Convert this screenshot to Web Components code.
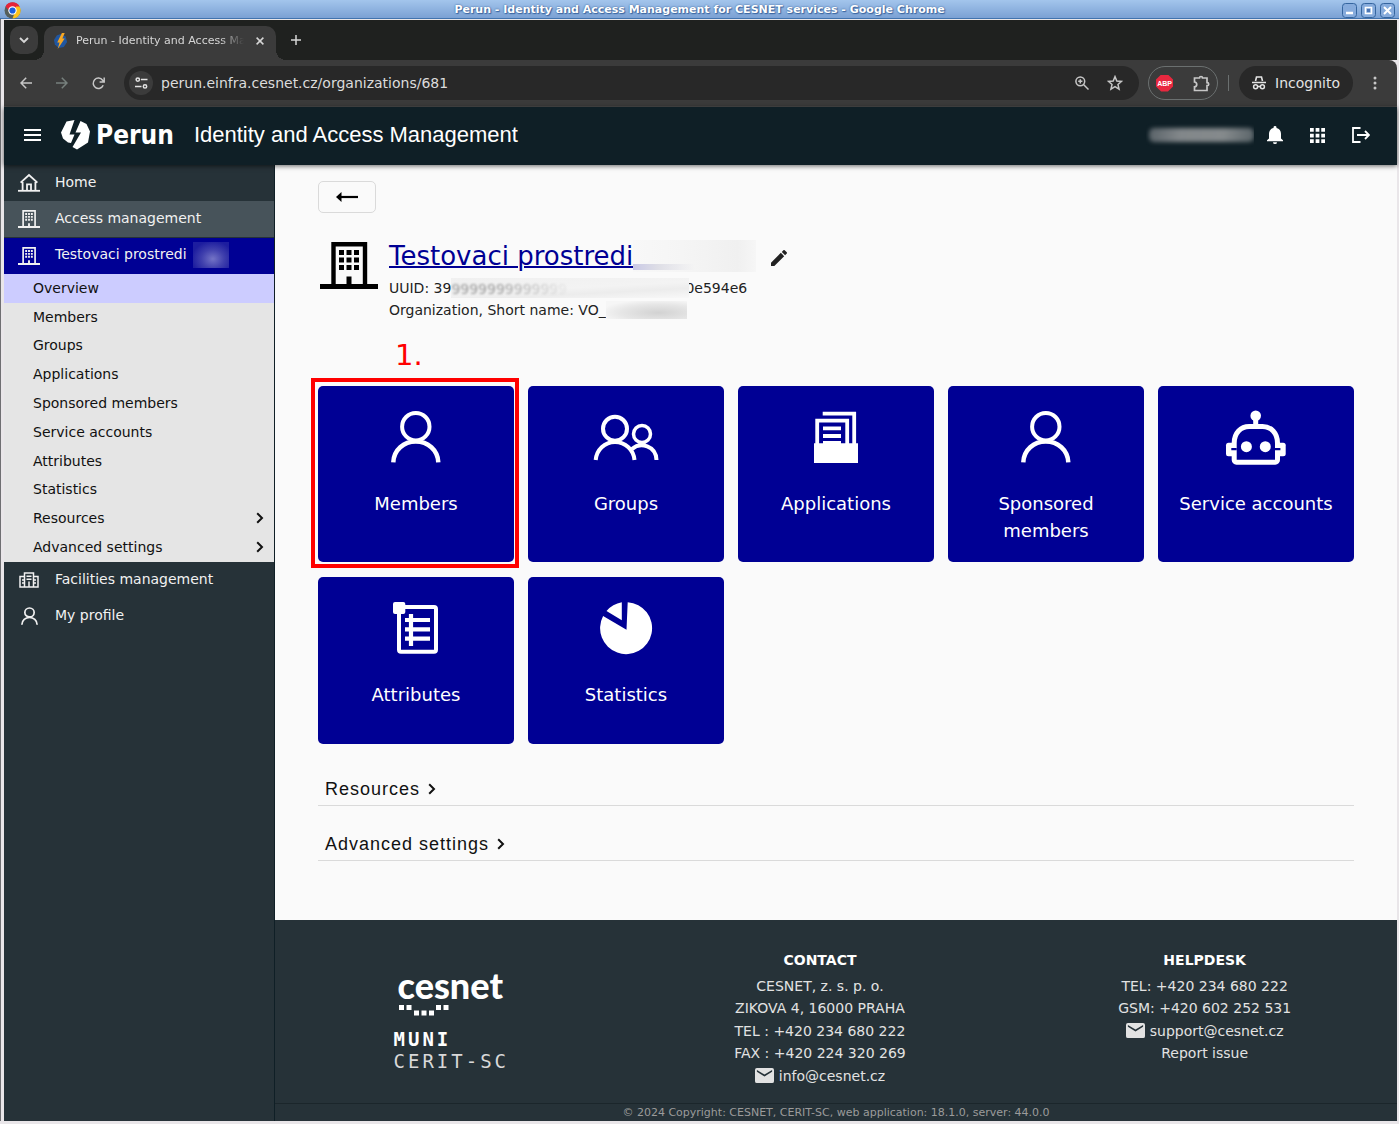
<!DOCTYPE html>
<html lang="en">
<head>
<meta charset="utf-8">
<meta name="viewport" content="width=device-width, initial-scale=1">
<title>Perun - Identity and Access Management for CESNET services</title>
<style>
    body {
        margin: 0;
        font-family: "DejaVu Sans", Verdana, sans-serif;
        font-size: 14px;
        line-height: 22px;
        color: #222;
    }
</style>
</head>
<body>

<desktop-window caption="Perun - Identity and Access Management for CESNET services - Google Chrome">
    <browser-tabs slot="chrome">Perun - Identity and Access Management for CESNET</browser-tabs>
    <browser-toolbar slot="chrome" url="perun.einfra.cesnet.cz/organizations/681"></browser-toolbar>

    <perun-header>Identity and Access Management</perun-header>
    <perun-layout>
        <perun-sidebar slot="side">
            <side-item icon="home">Home</side-item>
            <side-item icon="building" tone="open">Access management</side-item>
            <side-item icon="building" tone="current">Testovaci prostredi <smudge-patch kind="side"></smudge-patch></side-item>
            <side-submenu>
                <side-link active>Overview</side-link>
                <side-link>Members</side-link>
                <side-link>Groups</side-link>
                <side-link>Applications</side-link>
                <side-link>Sponsored members</side-link>
                <side-link>Service accounts</side-link>
                <side-link>Attributes</side-link>
                <side-link>Statistics</side-link>
                <side-link expandable>Resources</side-link>
                <side-link expandable>Advanced settings</side-link>
            </side-submenu>
            <side-item icon="facility">Facilities management</side-item>
            <side-item icon="profile">My profile</side-item>
        </perun-sidebar>

        <vo-overview>
            <vo-heading slot="heading"></vo-heading>
            <menu-card icon="user" step="1.">Members</menu-card>
            <menu-card icon="users">Groups</menu-card>
            <menu-card icon="applications">Applications</menu-card>
            <menu-card icon="user">Sponsored members</menu-card>
            <menu-card icon="robot">Service accounts</menu-card>
            <menu-card icon="attributes">Attributes</menu-card>
            <menu-card icon="statistics">Statistics</menu-card>
            <more-section slot="more">Resources</more-section>
            <more-section slot="more">Advanced settings</more-section>
        </vo-overview>

        <perun-footer></perun-footer>
    </perun-layout>
</desktop-window>

<script>
/* Inner markup of every icon, with its viewBox */
const ICONS = {
    home: ['0 0 22 20', `<path d="M0 17.8H22" stroke="currentColor" stroke-width="1.8"/><path d="M4.6 17V9M17.4 17V9M2.6 9.6L11 2l8.4 7.6M9 17v-5.6h4V17" fill="none" stroke="currentColor" stroke-width="1.8"/>`],
    building: ['0 0 58 47', `<path d="M13.500 43V2.200H45V43" fill="none" stroke="currentColor" stroke-width="4.400"/><path d="M0 42h58v5H0zM26.500 34.500h5V42h-5zM19 8h5v5h-5zM26.500 8h5v5h-5zM34 8h5v5h-5zM19 15.500h5v5h-5zM26.500 15.500h5v5h-5zM34 15.500h5v5h-5zM19 23h5v5h-5zM26.500 23h5v5h-5zM34 23h5v5h-5z" fill="currentColor"/>`],
    facility: ['0 0 20 16', `<path d="M5.500 15V1h9v14M5.500 4.500H1V15h18V4.500h-4.500M7.500 4.200h5M7.500 7.200h5M10 15V9.500M3 8h2M3 11h2M15 8h2M15 11h2" fill="none" stroke="currentColor" stroke-width="1.500"/>`],
    profile: ['8 4 50 56', `<g fill="none" stroke="currentColor" stroke-width="5"><circle cx="33" cy="21" r="13.700"/><path d="M10.500 59C11 45 21 36.500 33 36.500S55 45 55.500 59"/></g>`],
    user: ['0 0 66 66', `<g fill="none" stroke="currentColor"><circle cx="32.800" cy="21.700" r="13.700" stroke-width="4"/><path d="M10.300 57.300C10.800 45 20.800 36.500 32.800 36.500S54.800 45 55.300 57.300" stroke-width="4.500"/></g>`],
    users: ['0 0 66 66', `<g fill="none" stroke="currentColor" stroke-width="4"><circle cx="22" cy="23.700" r="12"/><path d="M2.700 55C3.500 45 11.500 37 22 37s18.700 8 19.500 18"/><circle cx="49" cy="29" r="8.500" stroke-width="3.500"/><path d="M39 44c8.500-7.500 24-3 24.500 11"/></g>`],
    applications: ['0 0 66 66', `<path d="M11 38.300h44V58H11z" fill="currentColor"/><path d="M14.200 39V15.600h30V39M19.700 8.600h31.500V39M20 23.300h18M20 31h18M20 38h18" fill="none" stroke="currentColor" stroke-width="3.800"/>`],
    robot: ['0 0 66 66', `<circle cx="32.700" cy="10.700" r="5.300" fill="currentColor"/><path d="M32.700 14v6" stroke="currentColor" stroke-width="5"/><rect x="3" y="37.700" width="59.700" height="13.600" rx="2.500" fill="currentColor"/><path d="M11.200 38c0-10 6.500-16.500 15-16.500h13.300c8.500 0 15 6.500 15 16.500v17a2.200 2.200 0 0 1-2.200 2.200H13.400a2.200 2.200 0 0 1-2.200-2.200z" fill="#000094" stroke="currentColor" stroke-width="5"/><path d="M8.300 43h5.400v2.200H8.300zM52 43h5.400v2.200H52z" fill="#000094"/><circle cx="23.400" cy="41.700" r="5.500" fill="currentColor"/><circle cx="42.300" cy="41.700" r="5.500" fill="currentColor"/>`],
    attributes: ['0 0 66 66', `<rect x="10" y="6" width="12.300" height="12" rx="2" fill="currentColor"/><rect x="16" y="11" width="37" height="44.700" rx="2" fill="none" stroke="currentColor" stroke-width="4"/><path d="M22 24h25M22 33.400h25M22 42.700h25M28 18v32" stroke="currentColor" stroke-width="4.200"/>`],
    statistics: ['0 0 66 66', `<path d="M34.700 6.200A26 26 0 1 1 10.100 20L33.500 33.700zM28.800 6.200V24.300L13.500 14.900A26 26 0 0 1 28.800 6.200z" fill="currentColor"/>`],
    chevron: ['0 0 8 12', `<path d="M1.200 1.200L6 6 1.200 10.800" fill="none" stroke="currentColor" stroke-width="2"/>`],
    arrow: ['0 0 22 12', `<path d="M4 6h18" stroke="currentColor" stroke-width="2.200"/><path d="M0 6l5.500-5v10z" fill="currentColor"/>`],
    pencil: ['3 3 18 18', `<path d="M3 17.250V21h3.750L17.810 9.940l-3.750-3.750L3 17.250zM20.710 7.040a1 1 0 0 0 0-1.410l-2.340-2.340a1 1 0 0 0-1.410 0l-1.830 1.830 3.750 3.750 1.830-1.830z" fill="currentColor"/>`],
    mail: ['2 4 20 16', `<path d="M20 4H4a2 2 0 0 0-2 2v12a2 2 0 0 0 2 2h16a2 2 0 0 0 2-2V6a2 2 0 0 0-2-2zm0 4l-8 5-8-5V6l8 5 8-5v2z" fill="currentColor"/>`],
    burger: ['0 0 17 12', `<path d="M0 1h17M0 6h17M0 11h17" stroke="currentColor" stroke-width="2"/>`],
    bell: ['4 2.500 16 19.500', `<path d="M12 22a2 2 0 0 0 2-2h-4a2 2 0 0 0 2 2zm6-6v-5c0-3.070-1.640-5.640-4.500-6.320V4a1.500 1.500 0 0 0-3 0v.68C7.630 5.360 6 7.920 6 11v5l-2 2v1h16v-1l-2-2z" fill="currentColor"/>`],
    apps: ['4 4 16 16', `<path d="M4 8h4V4H4zm6 12h4v-4h-4zm-6 0h4v-4H4zm0-6h4v-4H4zm6 0h4v-4h-4zm6-10v4h4V4zm-6 4h4V4h-4zm6 6h4v-4h-4zm0 6h4v-4h-4z" fill="currentColor"/>`],
    logout: ['0 0 18 16', `<path d="M8.500 1H1v14h7.500M5 8h12M13 4l4 4-4 4" fill="none" stroke="currentColor" stroke-width="1.800"/>`],
    emblem: ['0 0 30 30', `<path d="M5.500 1.500L13.500 0 8.500 14.500h5L10 23 7 22.500 2 18.500 0 12.500z" fill="currentColor"/><path d="M19.500 1L25.500 4 29 11.500 27 22.500 16 29.500 11.500 27 20 12.500h-5.500z" fill="currentColor"/>`],
    favicon: ['0 0 16 16', `<path d="M8 1l5.500 2.500L15 9l-3.500 5L6 15 2 11.500 1 7l3-4.500z" fill="#2056a0"/><path d="M9.500 0h3L10 5.500h2.500L5 16l2-6.500H4.500z" fill="#f5a623"/>`],
    chromium: ['0 0 17 17', `<circle cx="8.500" cy="8.500" r="8" fill="#555f5c"/><path d="M1.500 4.500a8 8 0 0 1 14 0L12 8.500H5z" fill="#e5233a"/><path d="M15.500 4.500a8 8 0 0 1-7 12L11 10l1-5.500z" fill="#fcc21b"/><circle cx="8.500" cy="8.500" r="4.200" fill="#fff"/><circle cx="8.500" cy="8.500" r="3.100" fill="#1a5fe0"/>`],
    down: ['0 0 10 7', `<path d="M1 1l4 4 4-4" fill="none" stroke="currentColor" stroke-width="1.900"/>`],
    close: ['0 0 8 8', `<path d="M.6.6l6.800 6.800M7.400.6L.6 7.400" stroke="currentColor" stroke-width="1.500"/>`],
    plus: ['0 0 10 10', `<path d="M5 0v10M0 5h10" stroke="currentColor" stroke-width="1.500"/>`],
    left: ['0 0 12 12', `<path d="M12 6H1.200M6.200.8L1 6l5.200 5.200" fill="none" stroke="currentColor" stroke-width="1.500"/>`],
    right: ['0 0 12 12', `<path d="M0 6h10.800M5.800.8L11 6l-5.200 5.200" fill="none" stroke="currentColor" stroke-width="1.500"/>`],
    reload: ['0 0 13 13', `<path d="M11.200 8.300A5.200 5.200 0 1 1 10.600 3.200L12 4.800M12.200.5v4.600H7.600" fill="none" stroke="currentColor" stroke-width="1.500"/>`],
    tune: ['0 0 13 12', `<g fill="none" stroke="currentColor" stroke-width="1.500"><circle cx="2.800" cy="2.600" r="1.700"/><path d="M6 2.600h6.500M0 9.400h6.500"/><circle cx="10" cy="9.400" r="1.700"/></g>`],
    zoom: ['0 0 14 14', `<g fill="none" stroke="currentColor" stroke-width="1.500"><circle cx="5.300" cy="5.300" r="4.400"/><path d="M8.500 8.500l5 5"/><path d="M5.300 3.200v4.200M3.200 5.300h4.200"/></g>`],
    star: ['0 0 15 15', `<path d="M7.500 1.500l1.700 4.100 4.400.4-3.300 2.900 1 4.300-3.800-2.300-3.800 2.300 1-4.300L1.400 6l4.400-.4z" fill="none" stroke="currentColor" stroke-width="1.400"/>`],
    puzzle: ['0 0 17 17', `<path d="M1.500 3h5c0-2 3-2 3 0H14v4.700c2.300 0 2.300 3 0 3V15.500H1.500v-3.700c3-.4 3-4.400 0-4.800z" fill="none" stroke="currentColor" stroke-width="1.700"/>`],
    spy: ['0 0 14 14', `<path d="M3.500 5l1-4h5l1 4M0 6.500h14" fill="none" stroke="currentColor" stroke-width="1.600"/><g fill="none" stroke="currentColor" stroke-width="1.500"><circle cx="3.600" cy="10.800" r="2"/><circle cx="10.400" cy="10.800" r="2"/><path d="M5.500 10.500h3"/></g>`],
    dots: ['0 0 4 14', `<g fill="currentColor"><circle cx="2" cy="2" r="1.500"/><circle cx="2" cy="7" r="1.500"/><circle cx="2" cy="12" r="1.500"/></g>`],
    minimize: ['0 0 15 15', `<rect x=".5" y=".5" width="14" height="14" rx="3" fill="#86abdc" stroke="#35659f"/><path d="M4 10h7" stroke="#fff" stroke-width="2.500"/>`],
    maximize: ['0 0 15 15', `<rect x=".5" y=".5" width="14" height="14" rx="3" fill="#86abdc" stroke="#35659f"/><path d="M4.500 4.500h6v6h-6z" fill="#86abdc" stroke="#fff" stroke-width="1.600"/><path d="M6 6h3v3H6z" fill="#4b76b4"/>`],
    quit: ['0 0 15 15', `<rect x=".5" y=".5" width="14" height="14" rx="3" fill="#86abdc" stroke="#35659f"/><path d="M4 4l7 7M11 4l-7 7" stroke="#fff" stroke-width="2"/>`]
};

const icon = (name, width, height) => `<svg width="${width}" height="${height}" viewBox="${ICONS[name][0]}" preserveAspectRatio="none" aria-hidden="true">${ICONS[name][1]}</svg>`;

/* Rules needed in every shadow root */
const BASE = `
    :host { display: block; box-sizing: border-box; }
    *, *::before, *::after { box-sizing: border-box; }
    svg { display: block; flex: none; }
    a { color: inherit; text-decoration: none; }
    button {
        display: flex;
        align-items: center;
        justify-content: center;
        padding: 0;
        border: 0;
        background: none;
        color: inherit;
        font: inherit;
        cursor: pointer;
    }
`;

class BaseElement extends HTMLElement {
    constructor() {
        super();

        this.shadow = this.attachShadow({mode: 'open'});
    }

    connectedCallback() {
        this.shadow.innerHTML = `<style>${BASE}${this.styles()}</style>${this.markup()}`;
    }

    styles() {
        return '';
    }

    markup() {
        return '<slot></slot>';
    }
}

/* Window frame with the title bar of the window manager */
class DesktopWindow extends BaseElement {
    styles() {
        return `
            :host {
                display: flex;
                flex-direction: column;
                min-height: 100vh;
                border: solid #e9e6e9;
                border-width: 0 2px 3px 0;
                box-shadow: inset 1px 0 #6f6f72;
                background: #e9e6e9;
            }
            .bar {
                display: grid;
                grid-template-columns: 60px 1fr 60px;
                align-items: center;
                height: 19px;
                margin-right: -2px;
                padding: 1px 4px 0 4px;
                border-bottom: 1px solid #4173ae;
                background: linear-gradient(#a3c5ec, #7ba1d4);
            }
            .title {
                text-align: center;
                color: #fff;
                font-size: 11px;
                font-weight: bold;
                line-height: 18px;
                text-shadow: 0 0 2px #2c568f, 1px 1px 1px #3c68a5;
                white-space: nowrap;
            }
            .buttons { display: flex; justify-content: flex-end; gap: 4px; }
            .content {
                display: flex;
                flex-direction: column;
                flex: 1;
                margin: 1px 0 0 4px;
            }
        `;
    }

    markup() {
        return `
            <div class="bar">
                ${icon('chromium', 17, 17)}
                <div class="title">${this.getAttribute('caption')}</div>
                <div class="buttons">
                    <button aria-label="Minimize">${icon('minimize', 15, 15)}</button>
                    <button aria-label="Maximize">${icon('maximize', 15, 15)}</button>
                    <button aria-label="Close">${icon('quit', 15, 15)}</button>
                </div>
            </div>
            <div class="content"><slot name="chrome"></slot><slot></slot></div>
        `;
    }
}

class BrowserTabs extends BaseElement {
    styles() {
        return `
            :host { background: #1f211f; color: #d6d6d6; }
            .strip { display: flex; align-items: flex-end; height: 40px; padding-left: 6px; }
            .list {
                width: 28px;
                height: 28px;
                margin: 0 6px 6px 0;
                border-radius: 10px;
                background: #3b3b3b;
            }
            .tab {
                position: relative;
                display: flex;
                align-items: center;
                width: 232px;
                height: 34px;
                padding: 0 12px 5px 9px;
                border-radius: 10px 10px 0 0;
                background: #3b3b3b;
                font-size: 11px;
            }
            .tab::before, .tab::after {
                content: "";
                position: absolute;
                bottom: 0;
                width: 10px;
                height: 10px;
            }
            .tab::before { right: 100%; background: radial-gradient(circle at 0 0, transparent 10px, #3b3b3b 10px); }
            .tab::after { left: 100%; background: radial-gradient(circle at 100% 0, transparent 10px, #3b3b3b 10px); }
            .name {
                flex: 1;
                margin: 0 12px 0 8px;
                overflow: hidden;
                white-space: nowrap;
                -webkit-mask-image: linear-gradient(to left, transparent, #000 24px);
                mask-image: linear-gradient(to left, transparent, #000 24px);
            }
            .new { width: 28px; height: 28px; margin: 0 0 6px 6px; }
        `;
    }

    markup() {
        return `
            <div class="strip">
                <button class="list" aria-label="Search tabs">${icon('down', 10, 7)}</button>
                <div class="tab">
                    ${icon('favicon', 15, 16)}
                    <span class="name"><slot></slot></span>
                    <button aria-label="Close tab">${icon('close', 8, 8)}</button>
                </div>
                <button class="new" aria-label="New tab">${icon('plus', 10, 10)}</button>
            </div>
        `;
    }
}

class BrowserToolbar extends BaseElement {
    styles() {
        return `
            :host {
                display: flex;
                align-items: center;
                height: 47px;
                padding: 0 20px 0 8px;
                border-bottom: 1px solid #4a4a4a;
                border-radius: 0 8px 0 0;
                background: #3b3b3b;
                color: #c7c7c7;
            }
            .nav { width: 28px; height: 28px; margin-right: 8px; }
            .off { color: #77807d; }
            .address {
                display: flex;
                flex: 1;
                align-items: center;
                height: 34px;
                margin: 0 9px 0 4px;
                padding: 0 16px 0 5px;
                border-radius: 17px;
                background: #282828;
            }
            .site { width: 24px; height: 24px; border-radius: 12px; background: #3b3b3b; color: #e3e3e3; }
            input {
                flex: 1;
                min-width: 0;
                height: 24px;
                margin: 0 8px;
                padding: 0;
                border: 0;
                outline: 0;
                background: none;
                color: #dcdcdc;
                font: inherit;
            }
            .bookmark { margin-left: 18px; }
            .extensions {
                display: flex;
                align-items: center;
                gap: 20px;
                height: 34px;
                padding: 0 7px;
                border: 1px solid #6b7070;
                border-radius: 17px;
            }
            .abp {
                width: 17px;
                height: 17px;
                background: #e8283f;
                color: #fff;
                font: bold 7px/17px "Liberation Sans", sans-serif;
                clip-path: polygon(30% 0, 70% 0, 100% 30%, 100% 70%, 70% 100%, 30% 100%, 0 70%, 0 30%);
            }
            .rule { width: 1px; height: 16px; margin: 0 10px; background: #6b7070; }
            .incognito {
                gap: 9px;
                height: 34px;
                margin-right: 20px;
                padding: 0 13px;
                border-radius: 17px;
                background: #282828;
                color: #e3e3e3;
            }
        `;
    }

    markup() {
        return `
            <button class="nav" aria-label="Back">${icon('left', 12, 12)}</button>
            <button class="nav off" aria-label="Forward">${icon('right', 12, 12)}</button>
            <button class="nav" aria-label="Reload">${icon('reload', 13, 13)}</button>
            <div class="address">
                <button class="site" aria-label="Site information">${icon('tune', 13, 12)}</button>
                <input type="text" aria-label="Address" value="${this.getAttribute('url')}">
                <button aria-label="Zoom">${icon('zoom', 14, 14)}</button>
                <button class="bookmark" aria-label="Bookmark">${icon('star', 16, 16)}</button>
            </div>
            <div class="extensions">
                <button class="abp">ABP</button>
                <button aria-label="Extensions">${icon('puzzle', 17, 17)}</button>
            </div>
            <div class="rule"></div>
            <button class="incognito">${icon('spy', 14, 14)}Incognito</button>
            <button aria-label="Menu">${icon('dots', 4, 14)}</button>
        `;
    }
}

class PerunHeader extends BaseElement {
    styles() {
        return `
            :host {
                position: relative;
                z-index: 1;
                display: flex;
                align-items: center;
                height: 58px;
                padding: 0 27px 2px 20px;
                background: #0f1f26;
                box-shadow: 0 1px 5px rgba(0, 0, 0, .6);
                color: #fff;
            }
            .logo {
                display: flex;
                align-items: center;
                gap: 5px;
                margin: 0 20px;
                font: bold 26px/30px "DejaVu Sans Condensed", "DejaVu Sans", sans-serif;
            }
            .title { font: 22px/30px "Liberation Sans", Arial, sans-serif; }
            .user { flex: 1; display: flex; justify-content: flex-end; margin-right: 13px; }
            .tools { display: flex; align-items: center; gap: 27px; }
        `;
    }

    markup() {
        return `
            <button aria-label="Toggle menu">${icon('burger', 17, 12)}</button>
            <a class="logo" href="#">${icon('emblem', 30, 30)}Perun</a>
            <span class="title"><slot></slot></span>
            <div class="user"><smudge-patch kind="user"></smudge-patch></div>
            <div class="tools">
                <button aria-label="Notifications">${icon('bell', 16, 18)}</button>
                <button aria-label="Applications">${icon('apps', 15, 15)}</button>
                <button aria-label="Log out">${icon('logout', 18, 16)}</button>
            </div>
        `;
    }
}

/* Smeared patch that hides a private name */
class SmudgePatch extends BaseElement {
    styles() {
        return `
            :host { display: inline-block; flex: none; vertical-align: middle; overflow: hidden; }
            :host([kind="user"]) { width: 108px; height: 24px; padding: 5px 0 5px 3px; }
            :host([kind="side"]) { width: 36px; height: 26px; margin-left: 2px; background: #1d1d9f; }
            :host([kind="title"]) { width: 123px; height: 32px; }
            :host([kind="uuid"]) { width: 238px; height: 20px; }
            :host([kind="name"]) { width: 81px; height: 18px; }
            div { height: 100%; }
            .user { border-radius: 5px; background: linear-gradient(100deg, #596268, #82878a 30%, #858a8c 70%, #5a6469); filter: blur(2px); }
            .side { background: radial-gradient(ellipse at 55% 65%, #7474c6, #4040ad 40%, #1d1d9f 75%); }
            .title {
                background:
                    linear-gradient(90deg, #c9c9e6, #dedee6 20%, transparent 50%) 0 24px / 100% 6px no-repeat,
                    linear-gradient(90deg, #f8f8f8, #f5f5f5 40%, #f0f0f0 85%, #f6f6f6);
            }
            .uuid {
                padding-top: 2px;
                background: linear-gradient(177deg, #f0f0f0, #f3f3f3 50%, #ececec 70%, #f8f8f8);
                color: #9a9a9a;
                line-height: 18px;
                white-space: nowrap;
            }
            .uuid span {
                display: block;
                filter: blur(1px);
                -webkit-mask-image: linear-gradient(90deg, #000 20%, transparent 52%);
                mask-image: linear-gradient(90deg, #000 20%, transparent 52%);
            }
            .name { background: radial-gradient(ellipse at 65% 65%, #d2d2d2, #e6e6e6 50%, #f6f6f6 80%); }
        `;
    }

    markup() {
        const kind = this.getAttribute('kind');

        return `<div class="${kind}">${kind === 'uuid' ? '<span>9999999999999</span>' : ''}</div>`;
    }
}

class PerunLayout extends BaseElement {
    styles() {
        return `
            :host { display: grid; flex: 1; grid-template-columns: 271px 1fr; }
            .page { display: flex; flex-direction: column; min-width: 0; background: #fafafa; }
        `;
    }

    markup() {
        return '<slot name="side"></slot><div class="page"><slot></slot></div>';
    }
}

class PerunSidebar extends BaseElement {
    styles() {
        return `
            :host { border-right: 1px solid #0f1f26; background: #263238; }
        `;
    }

    markup() {
        return '<nav><slot></slot></nav>';
    }
}

class SideItem extends BaseElement {
    styles() {
        return `
            a {
                display: flex;
                align-items: center;
                height: 36px;
                padding: 0 14px 2px;
                color: #f1f1f1;
            }
            .glyph { display: flex; justify-content: center; width: 22px; margin-right: 15px; padding-top: 2px; }
            .label { white-space: nowrap; }
            :host([tone="open"]) { background: #47535a; }
            :host([tone="current"]) { margin-top: 1px; background: #000094; }
        `;
    }

    markup() {
        const name = this.getAttribute('icon');
        const size = {home: [22, 20], building: [22, 18], facility: [20, 16], profile: [17, 18]}[name];

        return `<a href="#"><span class="glyph">${icon(name, ...size)}</span><span class="label"><slot></slot></span></a>`;
    }
}

class SideSubmenu extends BaseElement {
    styles() {
        return `
            :host { display: grid; grid-auto-rows: 1fr; min-height: 288px; background: #e5e5e5; }
        `;
    }
}

class SideLink extends BaseElement {
    styles() {
        return `
            :host { color: #111; }
            :host([active]) { background: #ccccff; }
            a {
                display: flex;
                align-items: center;
                justify-content: space-between;
                height: 100%;
                padding: 0 10px 1px 29px;
            }
        `;
    }

    markup() {
        return `<a href="#"><slot></slot>${this.hasAttribute('expandable') ? icon('chevron', 8, 12) : ''}</a>`;
    }
}

class VoHeading extends BaseElement {
    styles() {
        return `
            .back {
                width: 58px;
                height: 32px;
                border: 1px solid #dadada;
                border-radius: 5px;
                color: #000;
            }
            .vo { display: flex; gap: 11px; margin: 27px 0 0 2px; }
            .vo > svg { margin-top: 2px; color: #000; }
            h1 { display: flex; align-items: center; margin: 0 0 5px; font-size: 26px; font-weight: normal; line-height: 32px; }
            h1 a { color: #000094; text-decoration: underline; text-decoration-thickness: 2px; }
            h1 button { margin: 4px 0 0 15px; color: #222; }
            p { display: flex; align-items: center; margin: 0; }
            .uuid smudge-patch { position: relative; margin-right: -4px; }
        `;
    }

    markup() {
        return `
            <button class="back" aria-label="Back">${icon('arrow', 22, 12)}</button>
            <div class="vo">
                ${icon('building', 58, 47)}
                <div>
                    <h1><a href="#">Testovaci prostredi</a><smudge-patch kind="title"></smudge-patch><button aria-label="Edit">${icon('pencil', 16, 16)}</button></h1>
                    <p class="uuid"><span>UUID: 39</span><smudge-patch kind="uuid"></smudge-patch><span>0e594e6</span></p>
                    <p><span>Organization, Short name: VO_</span><smudge-patch kind="name"></smudge-patch></p>
                </div>
            </div>
        `;
    }
}

class VoOverview extends BaseElement {
    styles() {
        return `
            :host { flex: 1; padding: 16px 43px 59px; }
            .cards {
                display: grid;
                grid-template-columns: repeat(auto-fill, minmax(180px, 1fr));
                gap: 15px 14px;
                margin: 65px 0 28px;
            }
            .more { display: grid; gap: 21px; }
        `;
    }

    markup() {
        return `
            <slot name="heading"></slot>
            <div class="cards"><slot></slot></div>
            <div class="more"><slot name="more"></slot></div>
        `;
    }
}

class MenuCard extends BaseElement {
    styles() {
        return `
            :host { position: relative; }
            a {
                display: flex;
                flex-direction: column;
                align-items: center;
                gap: 19px;
                height: 100%;
                min-height: 167px;
                padding: 19px 16px 18px;
                border-radius: 5px;
                background: #000094;
                color: #fff;
                font-size: 18px;
                line-height: 27px;
                text-align: center;
            }
            .frame {
                position: absolute;
                inset: -8px -5px -6px -7px;
                border: 4px solid #f00;
                pointer-events: none;
            }
            .step {
                position: absolute;
                bottom: 100%;
                left: 77px;
                padding-bottom: 15px;
                color: #f00;
                font-size: 29px;
                line-height: 32px;
            }
        `;
    }

    markup() {
        const step = this.getAttribute('step');

        return `
            <a href="#">${icon(this.getAttribute('icon'), 66, 66)}<span><slot></slot></span></a>
            ${step ? `<div class="frame"></div><div class="step">${step}</div>` : ''}
        `;
    }
}

class MoreSection extends BaseElement {
    styles() {
        return `
            :host { border-bottom: 1px solid #dadada; color: #111; }
            button {
                gap: 8px;
                height: 33px;
                padding-left: 7px;
                font: 18px/32px "Liberation Sans", Arial, sans-serif;
                letter-spacing: 1px;
            }
        `;
    }

    markup() {
        return `<button><slot></slot>${icon('chevron', 8, 12)}</button>`;
    }
}

class PerunFooter extends BaseElement {
    styles() {
        return `
            :host { background: #263238; color: #e2e2e2; }
            .columns {
                display: grid;
                grid-template-columns: 11fr 12fr 12fr;
                justify-items: center;
                padding: 29px 0 16px;
                text-align: center;
            }
            h2 { margin: 0 0 4px; color: #fff; font-size: 14px; line-height: 22px; }
            ul {
                display: grid;
                grid-template-rows: repeat(5, 1fr);
                min-height: 112px;
                margin: 0;
                padding: 0;
                list-style: none;
            }
            li a { display: flex; align-items: center; justify-content: center; gap: 5px; }
            .logos { padding-top: 16px; color: #fff; text-align: left; }
            .cesnet { display: block; padding-left: 4px; font: 900 36px/40px Lato, sans-serif; }
            .smile { display: block; margin: 0 0 12px 5px; }
            .muni { display: block; color: #d8d8d8; font: 19px/22px "DejaVu Sans Mono", monospace; letter-spacing: 3px; }
            .muni b { display: block; color: #fff; }
            .copyright {
                padding: 0 16px;
                border-top: 1px solid #1b262b;
                color: #9b9b9b;
                font-size: 11px;
                line-height: 17px;
                text-align: center;
            }
        `;
    }

    markup() {
        return `
            <footer>
                <div class="columns">
                    <div class="logos">
                        <a class="cesnet" href="#">cesnet</a>
                        <svg class="smile" width="50" height="11" viewBox="0 0 50 11" fill="currentColor" aria-hidden="true"><path d="M0 0h5v5H0zM7.500 0h5v5h-5zM15 5.500h5v5h-5zM22.500 5.500h5v5h-5zM30 5.500h5v5h-5zM37 0h5v5h-5zM44.500 0h5v5h-5z"/></svg>
                        <a class="muni" href="#"><b>MUNI</b>CERIT-SC</a>
                    </div>
                    <div>
                        <h2>CONTACT</h2>
                        <ul>
                            <li>CESNET, z. s. p. o.</li>
                            <li>ZIKOVA 4, 16000 PRAHA</li>
                            <li>TEL : +420 234 680 222</li>
                            <li>FAX : +420 224 320 269</li>
                            <li><a href="mailto:info@cesnet.cz">${icon('mail', 19, 15)}info@cesnet.cz</a></li>
                        </ul>
                    </div>
                    <div>
                        <h2>HELPDESK</h2>
                        <ul>
                            <li>TEL: +420 234 680 222</li>
                            <li>GSM: +420 602 252 531</li>
                            <li><a href="mailto:support@cesnet.cz">${icon('mail', 19, 15)}support@cesnet.cz</a></li>
                            <li><a href="#">Report issue</a></li>
                        </ul>
                    </div>
                </div>
                <div class="copyright">© 2024 Copyright: CESNET, CERIT-SC, web application: 18.1.0, server: 44.0.0</div>
            </footer>
        `;
    }
}

// Define the elements
customElements.define('smudge-patch', SmudgePatch);
customElements.define('desktop-window', DesktopWindow);
customElements.define('browser-tabs', BrowserTabs);
customElements.define('browser-toolbar', BrowserToolbar);
customElements.define('perun-header', PerunHeader);
customElements.define('perun-layout', PerunLayout);
customElements.define('perun-sidebar', PerunSidebar);
customElements.define('side-item', SideItem);
customElements.define('side-submenu', SideSubmenu);
customElements.define('side-link', SideLink);
customElements.define('vo-heading', VoHeading);
customElements.define('vo-overview', VoOverview);
customElements.define('menu-card', MenuCard);
customElements.define('more-section', MoreSection);
customElements.define('perun-footer', PerunFooter);
</script>
</body>
</html>
